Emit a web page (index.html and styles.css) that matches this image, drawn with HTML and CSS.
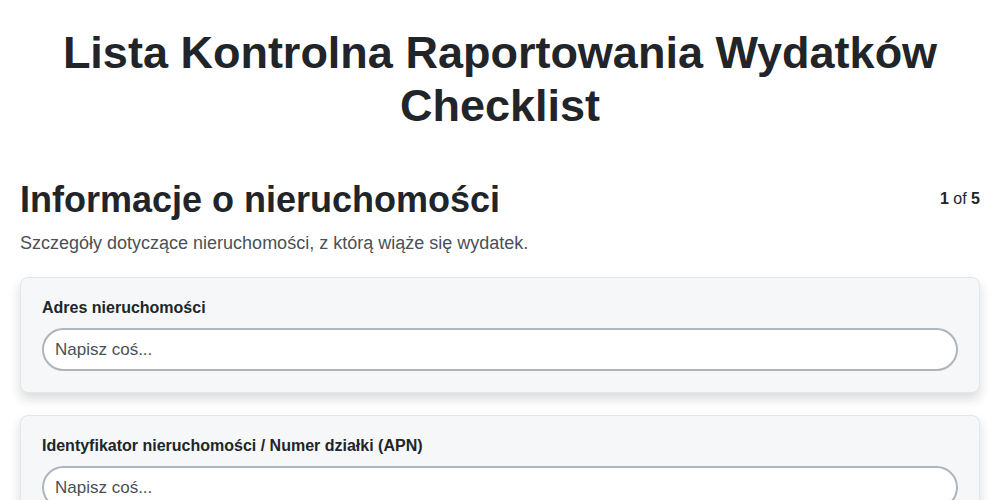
FILE: index.html
```html
<!DOCTYPE html>
<html lang="pl">
<head>
<meta charset="utf-8">
<title>Lista Kontrolna</title>
<link rel="stylesheet" href="styles.css">
</head>
<body>
<div class="page">
  <h1 class="title">Lista Kontrolna Raportowania Wydatków Checklist</h1>
  <section class="section">
    <div class="section-head">
      <div class="section-text">
        <h2 class="section-title">Informacje o nieruchomości</h2>
        <p class="section-desc">Szczegóły dotyczące nieruchomości, z którą wiąże się wydatek.</p>
      </div>
      <div class="step"><b>1</b> of <b>5</b></div>
    </div>
    <div class="card">
      <label class="field-label">Adres nieruchomości</label>
      <input class="field-input" type="text" placeholder="Napisz coś...">
    </div>
    <div class="card">
      <label class="field-label">Identyfikator nieruchomości / Numer działki (APN)</label>
      <input class="field-input" type="text" placeholder="Napisz coś...">
    </div>
  </section>
</div>
</body>
</html>
```
FILE: styles.css
```css
html, body {
  margin: 0;
  padding: 0;
  background: #ffffff;
}
body {
  font-family: "Liberation Sans", Arial, sans-serif;
  color: #212529;
}
.page {
  padding: 26px 20px 20px;
}
.title {
  margin: 0;
  text-align: center;
  font-size: 45px;
  line-height: 53px;
  font-weight: 700;
  color: #212529;
  padding: 0 40px;
}
.section {
  margin-top: 46px;
}
.section-head {
  display: flex;
  justify-content: space-between;
  align-items: flex-start;
  margin-bottom: 22px;
}
.section-title {
  margin: 0;
  font-size: 36px;
  line-height: 1.2;
  font-weight: 700;
  color: #212529;
}
.section-desc {
  margin: 10px 0 0;
  font-size: 18px;
  line-height: 24px;
  color: #495057;
}
.step {
  margin-top: 11px;
  font-size: 16px;
  line-height: 20px;
  color: #212529;
}
.card {
  background: #f6f7f9;
  border: 1px solid #e3e6ea;
  border-radius: 8px;
  box-shadow: 0 6px 12px rgba(0, 0, 0, 0.15);
  padding: 18px 21px 21px;
  margin-bottom: 22px;
}
.field-label {
  display: block;
  font-size: 16px;
  line-height: 24px;
  font-weight: 700;
  color: #212529;
  margin-bottom: 8px;
}
.field-input {
  display: block;
  box-sizing: border-box;
  width: 100%;
  height: 43px;
  border: 2px solid #adb5bd;
  border-radius: 22px;
  background: #ffffff;
  padding: 0 11px;
  font-family: "Liberation Sans", Arial, sans-serif;
  font-size: 17px;
  color: #212529;
  outline: none;
}
.field-input::placeholder {
  color: #495057;
  opacity: 1;
}
```
